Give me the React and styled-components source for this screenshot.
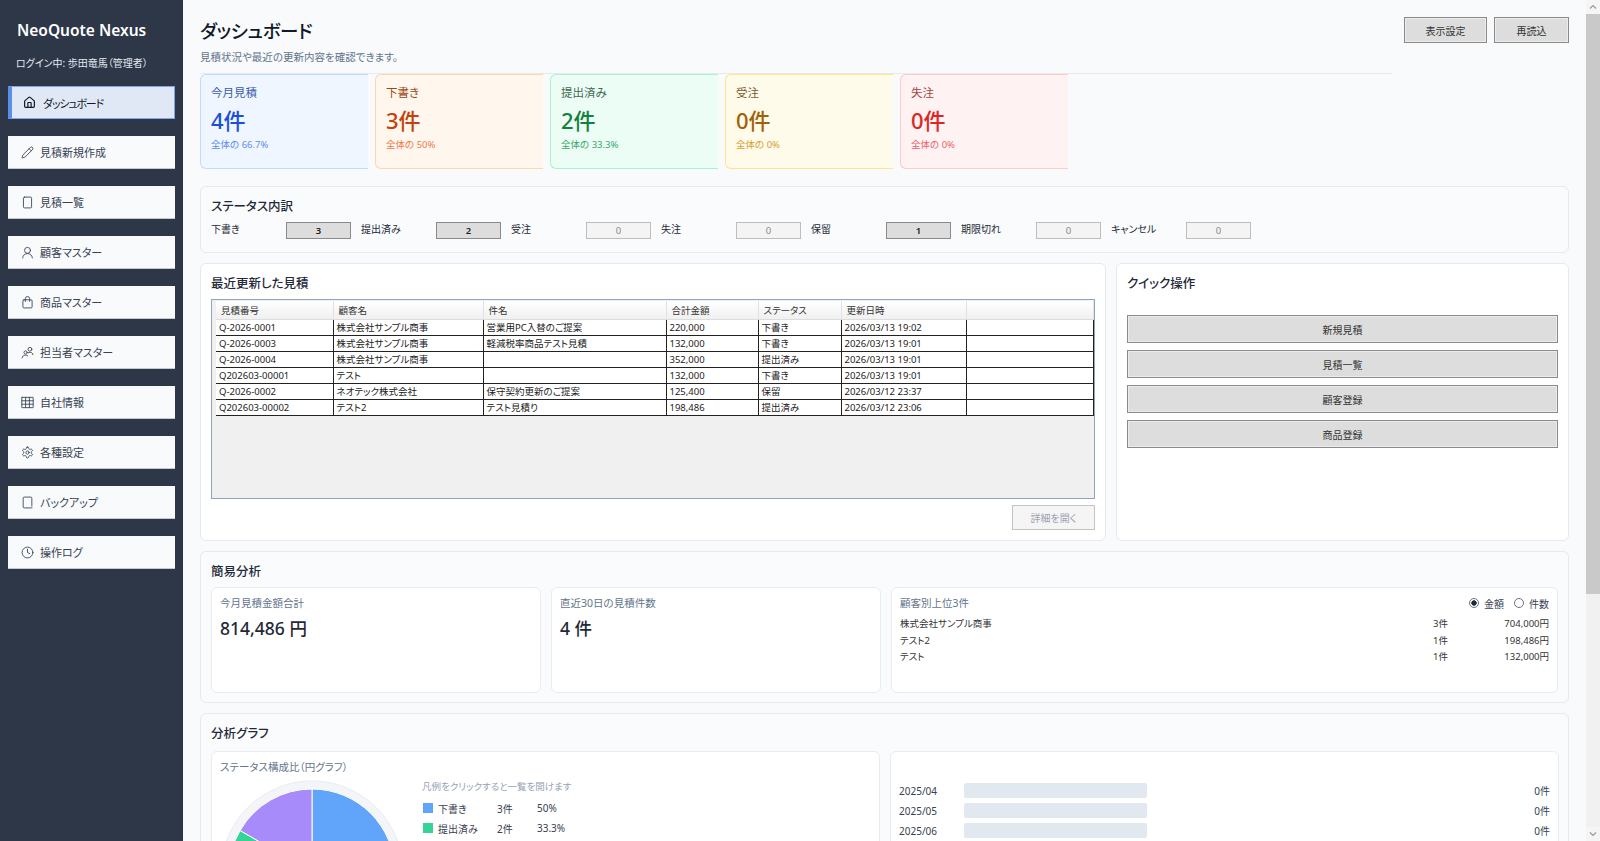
import React from 'react';
import styled, { createGlobalStyle } from 'styled-components';

const GlobalStyle = createGlobalStyle`
  html, body {
    margin: 0;
    height: 100%;
    overflow: hidden;
    background: #f8fafc;
  }
  * {
    box-sizing: border-box;
  }
  body {
    font-family: "Noto Sans", "Noto Sans CJK JP", sans-serif;
    font-feature-settings: "palt";
    font-size: 11px;
    color: #1f2937;
  }
`;

const Shell = styled.div`
  display: flex;
  width: 1600px;
  height: 841px;
  overflow: hidden;
`;

const Sidebar = styled.aside`
  flex: 0 0 183px;
  background: #2d3748;
  padding: 0 8px;
`;

const Brand = styled.div`
  margin: 18px 0 0 9px;
  height: 24px;
  line-height: 24px;
  font-size: 15.5px;
  font-weight: 600;
  color: #ffffff;
`;

const LoginInfo = styled.div`
  margin: 13px 0 15px 8px;
  height: 16px;
  line-height: 16px;
  font-size: 10px;
  color: #e2e8f0;
`;

const NavList = styled.nav`
  display: flex;
  flex-direction: column;
  gap: 17px;
`;

const NavButton = styled.div`
  display: flex;
  align-items: center;
  height: 33px;
  gap: ${p => (p.$active ? '7px' : '6px')};
  padding-left: ${p => (p.$active ? '11px' : '13px')};
  font-size: 11px;
  letter-spacing: ${p => (p.$active ? '-1.2px' : '0')};
  color: #374151;
  background: ${p => (p.$active ? '#e1e8f5' : '#f8fafc')};
  border-bottom: 1px solid #c4c9d0;
  ${p =>
    p.$active &&
    `
    color: #111827;
    border: 1px solid #7fa6e6;
    border-left: 4px solid #5b8ee6;
  `}
  svg {
    flex: none;
    width: 13px;
    height: 13px;
    fill: none;
    stroke: currentColor;
    stroke-width: ${p => (p.$active ? '2.2' : '1.6')};
    stroke-linecap: round;
    stroke-linejoin: round;
  }
`;

const Main = styled.main`
  flex: 1;
  min-width: 0;
  padding: 17px 17px 0;
  overflow: hidden;
  background: #f8fafc;
`;

const ScrollTrack = styled.div`
  flex: 0 0 14px;
  display: flex;
  flex-direction: column;
  background: #f1f1f1;
`;

const ScrollArrow = styled.div`
  flex: 0 0 14px;
  display: flex;
  align-items: center;
  justify-content: center;
  background: #f5f5f5;
  svg {
    width: 8px;
    height: 8px;
    fill: none;
    stroke: #9a9a9a;
    stroke-width: 1.2;
  }
`;

const ScrollThumb = styled.div`
  flex: 0 0 580px;
  background: #c9c9c9;
`;

const ScrollRest = styled.div`
  flex: 1;
`;

const TopArea = styled.div`
  display: flex;
  justify-content: space-between;
  align-items: flex-start;
`;

const Heading = styled.div`
  width: 1192px;
`;

const PageTitle = styled.h1`
  margin: 2px 0 0;
  height: 24px;
  line-height: 24px;
  font-size: 18.5px;
  letter-spacing: -0.4px;
  font-weight: 500;
  color: #111827;
`;

const PageSub = styled.p`
  margin: 6px 0 8px;
  height: 16px;
  line-height: 16px;
  font-size: 10.5px;
  color: #64748b;
`;

const CardRow = styled.div`
  display: flex;
  gap: 7px;
  border-top: 1px solid #e5eaf0;
`;

const SummaryCard = styled.div`
  flex: 0 0 168px;
  height: 95px;
  padding: 10px;
  background: ${p => p.$bg};
  border: 1px solid ${p => p.$line};
  border-right: none;
  border-radius: 6px 0 0 6px;
`;

const CardLabel = styled.div`
  height: 16px;
  line-height: 16px;
  font-size: 11.5px;
  color: ${p => p.$color};
`;

const CardValue = styled.div`
  margin-top: 5px;
  height: 28px;
  line-height: 28px;
  font-size: 22px;
  font-weight: 500;
  color: ${p => p.$color};
`;

const CardSub = styled.div`
  margin-top: 4px;
  height: 14px;
  line-height: 14px;
  font-size: 9.5px;
  color: ${p => p.$color};
`;

const ActionGroup = styled.div`
  display: flex;
  gap: 7px;
`;

const ClassicButton = styled.button`
  height: ${p => p.$height || 26}px;
  width: ${p => (p.$width ? `${p.$width}px` : 'auto')};
  padding: 0;
  font: inherit;
  font-size: 10px;
  color: ${p => (p.disabled ? '#9ca3af' : '#333333')};
  background: ${p => (p.disabled ? '#f5f5f5' : '#dddddd')};
  border: 1px solid ${p => (p.disabled ? '#c4c4c4' : '#8a8a8a')};
  box-shadow: ${p => (p.disabled ? 'none' : 'inset 0 0 0 1px #ececec')};
`;

const Panel = styled.section`
  margin-top: ${p => p.$top || 0}px;
  padding: 10px;
  height: ${p => (p.$height ? `${p.$height}px` : 'auto')};
  background: ${p => (p.$white ? '#ffffff' : '#f9fbfd')};
  border: 1px solid #e5eaf0;
  border-radius: 6px;
`;

const PanelTitle = styled.h2`
  margin: 0 0 ${p => p.$gap || 5}px;
  height: 20px;
  line-height: 20px;
  font-size: 12.5px;
  font-weight: 500;
  color: #1f2937;
`;

const StatusGrid = styled.div`
  display: grid;
  grid-template-columns: repeat(7, 150px);
  margin-top: 2px;
`;

const StatusCell = styled.div`
  display: flex;
  align-items: center;
  height: 17px;
`;

const StatusLabel = styled.span`
  flex: 0 0 75px;
  font-size: 10px;
  margin-top: -4px;
`;

const StatusValue = styled.span`
  flex: 0 0 65px;
  height: 17px;
  line-height: 15px;
  text-align: center;
  font-size: 9.5px;
  color: ${p => (p.$on ? '#222222' : '#8a8a8a')};
  font-weight: ${p => (p.$on ? 600 : 400)};
  background: ${p => (p.$on ? '#dddddd' : '#f4f4f4')};
  border: 1px solid ${p => (p.$on ? '#8a8a8a' : '#bdbdbd')};
`;

const SplitRow = styled.div`
  display: grid;
  grid-template-columns: 906px 453px;
  gap: 10px;
  margin-top: 10px;
`;

const TableFrame = styled.div`
  height: 200px;
  padding: 1px 0 0 4px;
  background: #f0f0f0;
  border: 1px solid #8ea4c2;
`;

const QuoteTable = styled.table`
  width: 100%;
  table-layout: fixed;
  border-collapse: collapse;
  font-size: 9.5px;
`;

const HeadCell = styled.th`
  width: ${p => (p.$w ? `${p.$w}px` : 'auto')};
  height: 18px;
  padding: 0 0 0 5px;
  text-align: left;
  font-weight: 400;
  color: #333333;
  background: linear-gradient(#ffffff, #f0f0f0);
  border-right: 1px solid #e2e2e2;
  border-bottom: 1px solid #dcdcdc;
`;

const BodyRow = styled.tr`
  height: 15.85px;
  background: #ffffff;
`;

const BodyCell = styled.td`
  padding: 1px 0 0 3px;
  line-height: 14px;
  color: #222222;
  white-space: nowrap;
  overflow: hidden;
  border-right: 1px solid #222222;
  border-bottom: 1px solid #222222;
`;

const DetailRow = styled.div`
  display: flex;
  justify-content: flex-end;
  margin-top: 6px;
`;

const QuickList = styled.div`
  display: flex;
  flex-direction: column;
  gap: 7px;
`;

const AnalysisGrid = styled.div`
  display: grid;
  grid-template-columns: 330px 330px 1fr;
  gap: 10px;
  height: 106px;
`;

const InnerCard = styled.div`
  padding: 7px 8px;
  background: #ffffff;
  border: 1px solid #e8ecf1;
  border-radius: 6px;
`;

const InnerLabel = styled.div`
  height: 16px;
  line-height: 16px;
  font-size: 10.5px;
  color: #64748b;
`;

const InnerValue = styled.div`
  margin-top: 5px;
  height: 24px;
  line-height: 24px;
  font-size: 17.5px;
  font-weight: 500;
  color: #1f2937;
`;

const RankHead = styled.div`
  display: flex;
  justify-content: space-between;
  align-items: center;
  margin-bottom: 5px;
`;

const RadioGroup = styled.div`
  display: flex;
  align-items: center;
  font-size: 10px;
  color: #374151;
`;

const RadioDot = styled.span`
  width: 10px;
  height: 10px;
  margin: 0 5px 0 10px;
  border-radius: 50%;
  border: 1px solid #6b7280;
  background: ${p => (p.$on ? 'radial-gradient(circle, #1f2937 0 2.4px, #ffffff 3px)' : '#ffffff')};
`;

const RankRow = styled.div`
  display: grid;
  grid-template-columns: 1fr 40px 101px;
  height: 16.5px;
  line-height: 16.5px;
  font-size: 9.5px;
  color: #333333;
`;

const RightText = styled.span`
  text-align: right;
`;

const GraphGrid = styled.div`
  display: grid;
  grid-template-columns: 669px 669px;
  gap: 10px;
`;

const GraphCard = styled(InnerCard)`
  height: 240px;
`;

const PieRow = styled.div`
  display: flex;
  margin-top: 5px;
`;

const PieSvg = styled.svg`
  flex: 0 0 184px;
  width: 184px;
  height: 184px;
`;

const Legend = styled.div`
  margin: -1px 0 0 18px;
`;

const LegendHint = styled.div`
  height: 16px;
  line-height: 16px;
  font-size: 9.5px;
  color: #94a3b8;
`;

const LegendRow = styled.div`
  display: flex;
  align-items: center;
  height: 20px;
  font-size: 10px;
  color: #374151;
  margin-top: ${p => (p.$first ? '3px' : '0')};
`;

const LegendSwatch = styled.span`
  flex: 0 0 10px;
  height: 10px;
  margin: 0 5px 0 1px;
  background: ${p => p.$color};
`;

const LegendName = styled.span`
  flex: 0 0 59px;
`;

const LegendCount = styled.span`
  flex: 0 0 40px;
`;

const BarList = styled.div`
  display: flex;
  flex-direction: column;
  gap: 5px;
  padding-top: 24px;
`;

const BarRow = styled.div`
  display: flex;
  align-items: center;
  height: 15px;
  font-size: 10px;
  color: #374151;
`;

const BarMonth = styled.span`
  flex: 0 0 65px;
`;

const BarTrack = styled.span`
  flex: 0 0 183px;
  height: 15px;
  background: #e2e8f0;
  border-radius: 2px;
`;

const BarCount = styled.span`
  flex: 1;
  text-align: right;
`;

const navItems = [
  {
    label: 'ダッシュボード',
    active: true,
    icon: (
      <>
        <path d="M15 21v-8a1 1 0 0 0-1-1h-4a1 1 0 0 0-1 1v8" />
        <path d="M3 10a2 2 0 0 1 .7-1.5l7-6a2 2 0 0 1 2.6 0l7 6A2 2 0 0 1 21 10v9a2 2 0 0 1-2 2H5a2 2 0 0 1-2-2z" />
      </>
    ),
  },
  {
    label: '見積新規作成',
    icon: (
      <>
        <path d="M21.2 6.8a2.8 2.8 0 0 0-4-4L3.8 16.2a2 2 0 0 0-.5.8l-1.3 4.4a.5.5 0 0 0 .6.6l4.4-1.3a2 2 0 0 0 .8-.5z" />
        <path d="m15 5 4 4" />
      </>
    ),
  },
  { label: '見積一覧', icon: <rect x="4.5" y="2" width="15" height="20" rx="2" /> },
  {
    label: '顧客マスター',
    icon: (
      <>
        <circle cx="12" cy="8" r="5.5" />
        <path d="M3 22c.5-5 4-8 9-8s8.5 3 9 8" />
      </>
    ),
  },
  {
    label: '商品マスター',
    icon: (
      <>
        <rect x="3.5" y="7" width="17" height="15" rx="2" />
        <path d="M8 10V5a4 4 0 0 1 8 0v5" />
      </>
    ),
  },
  {
    label: '担当者マスター',
    icon: (
      <>
        <circle cx="8.5" cy="12" r="3" />
        <path d="M2 22c.4-3.5 3-5 6.5-5 1.5 0 3 .4 4 1.2" />
        <circle cx="16.5" cy="6" r="3.5" />
        <path d="M13.5 12.5c2-1 5.5-1 7 .5 1 1 1.5 2 1.5 3" />
      </>
    ),
  },
  {
    label: '自社情報',
    icon: (
      <>
        <rect x="1.5" y="2.5" width="21" height="19" rx="0.5" />
        <path d="M1.5 8.8h21M1.5 15.2h21M8.5 2.5v19M15.5 2.5v19" />
      </>
    ),
  },
  {
    label: '各種設定',
    icon: (
      <>
        <path d="M12.22 2h-.44a2 2 0 0 0-2 2v.18a2 2 0 0 1-1 1.73l-.43.25a2 2 0 0 1-2 0l-.15-.08a2 2 0 0 0-2.73.73l-.22.38a2 2 0 0 0 .73 2.73l.15.1a2 2 0 0 1 1 1.72v.51a2 2 0 0 1-1 1.74l-.15.09a2 2 0 0 0-.73 2.73l.22.38a2 2 0 0 0 2.73.73l.15-.08a2 2 0 0 1 2 0l.43.25a2 2 0 0 1 1 1.73V20a2 2 0 0 0 2 2h.44a2 2 0 0 0 2-2v-.18a2 2 0 0 1 1-1.73l.43-.25a2 2 0 0 1 2 0l.15.08a2 2 0 0 0 2.73-.73l.22-.39a2 2 0 0 0-.73-2.73l-.15-.08a2 2 0 0 1-1-1.74v-.5a2 2 0 0 1 1-1.74l.15-.09a2 2 0 0 0 .73-2.73l-.22-.38a2 2 0 0 0-2.73-.73l-.15.08a2 2 0 0 1-2 0l-.43-.25a2 2 0 0 1-1-1.73V4a2 2 0 0 0-2-2z" />
        <circle cx="12" cy="12" r="3" />
      </>
    ),
  },
  {
    label: 'バックアップ',
    icon: (
      <>
        <path d="M20 18V4a2 2 0 0 0-2-2H6a2 2 0 0 0-2 2v16a2 2 0 0 0 2 2h12" />
        <path d="M20 20.5v1.5" />
      </>
    ),
  },
  {
    label: '操作ログ',
    icon: (
      <>
        <circle cx="12" cy="12" r="10" />
        <path d="M12 6v6l4 2" />
      </>
    ),
  },
];

const summaryCards = [
  { label: '今月見積', value: '4件', sub: '全体の 66.7%', bg: '#eff6ff', line: '#bfdbfe', head: '#3b5ba9', main: '#1d4ed8', note: '#5b8def' },
  { label: '下書き', value: '3件', sub: '全体の 50%', bg: '#fff7ed', line: '#fed7aa', head: '#9a4a20', main: '#c2410c', note: '#f0784a' },
  { label: '提出済み', value: '2件', sub: '全体の 33.3%', bg: '#ecfdf5', line: '#a7f3d0', head: '#3f6b50', main: '#15803d', note: '#35a868' },
  { label: '受注', value: '0件', sub: '全体の 0%', bg: '#fffbeb', line: '#fde68a', head: '#7c5a2e', main: '#a16207', note: '#d69e2e' },
  { label: '失注', value: '0件', sub: '全体の 0%', bg: '#fef2f2', line: '#fecaca', head: '#a14646', main: '#dc2626', note: '#ee5f6a' },
];

const statusCounts = [
  ['下書き', 3],
  ['提出済み', 2],
  ['受注', 0],
  ['失注', 0],
  ['保留', 1],
  ['期限切れ', 0],
  ['キャンセル', 0],
];

const columns = [
  ['見積番号', 117],
  ['顧客名', 150],
  ['件名', 183],
  ['合計金額', 92],
  ['ステータス', 83],
  ['更新日時', 125],
  ['', 0],
];

const quotes = [
  ['Q-2026-0001', '株式会社サンプル商事', '営業用PC入替のご提案', '220,000', '下書き', '2026/03/13 19:02'],
  ['Q-2026-0003', '株式会社サンプル商事', '軽減税率商品テスト見積', '132,000', '下書き', '2026/03/13 19:01'],
  ['Q-2026-0004', '株式会社サンプル商事', '', '352,000', '提出済み', '2026/03/13 19:01'],
  ['Q202603-00001', 'テスト', '', '132,000', '下書き', '2026/03/13 19:01'],
  ['Q-2026-0002', 'ネオテック株式会社', '保守契約更新のご提案', '125,400', '保留', '2026/03/12 23:37'],
  ['Q202603-00002', 'テスト2', 'テスト見積り', '198,486', '提出済み', '2026/03/12 23:06'],
];

const ranking = [
  ['株式会社サンプル商事', '3件', '704,000円'],
  ['テスト2', '1件', '198,486円'],
  ['テスト', '1件', '132,000円'],
];

const legend = [
  ['下書き', '3件', '50%', '#60a5fa'],
  ['提出済み', '2件', '33.3%', '#34d399'],
];

const months = ['2025/04', '2025/05', '2025/06'];

const App = () => (
  <>
    <GlobalStyle />
    <Shell>
      <Sidebar>
        <Brand>NeoQuote Nexus</Brand>
        <LoginInfo>ログイン中: 歩田竜馬（管理者）</LoginInfo>
        <NavList>
          {navItems.map(item => (
            <NavButton key={item.label} $active={item.active}>
              <svg viewBox="0 0 24 24">{item.icon}</svg>
              {item.label}
            </NavButton>
          ))}
        </NavList>
      </Sidebar>

      <Main>
        <TopArea>
          <Heading>
            <PageTitle>ダッシュボード</PageTitle>
            <PageSub>見積状況や最近の更新内容を確認できます。</PageSub>
            <CardRow>
              {summaryCards.map(card => (
                <SummaryCard key={card.label} $bg={card.bg} $line={card.line}>
                  <CardLabel $color={card.head}>{card.label}</CardLabel>
                  <CardValue $color={card.main}>{card.value}</CardValue>
                  <CardSub $color={card.note}>{card.sub}</CardSub>
                </SummaryCard>
              ))}
            </CardRow>
          </Heading>
          <ActionGroup>
            <ClassicButton $width={83}>表示設定</ClassicButton>
            <ClassicButton $width={75}>再読込</ClassicButton>
          </ActionGroup>
        </TopArea>

        <Panel $top={17} $height={67}>
          <PanelTitle $gap={0}>ステータス内訳</PanelTitle>
          <StatusGrid>
            {statusCounts.map(([label, count]) => (
              <StatusCell key={label}>
                <StatusLabel>{label}</StatusLabel>
                <StatusValue $on={count > 0}>{count}</StatusValue>
              </StatusCell>
            ))}
          </StatusGrid>
        </Panel>

        <SplitRow>
          <Panel $white $height={278}>
            <PanelTitle>最近更新した見積</PanelTitle>
            <TableFrame>
              <QuoteTable>
                <thead>
                  <tr>
                    {columns.map(([name, width]) => (
                      <HeadCell key={name} $w={width}>{name}</HeadCell>
                    ))}
                  </tr>
                </thead>
                <tbody>
                  {quotes.map(row => (
                    <BodyRow key={row[0]}>
                      {row.map((value, i) => (
                        <BodyCell key={i}>{value}</BodyCell>
                      ))}
                      <BodyCell />
                    </BodyRow>
                  ))}
                </tbody>
              </QuoteTable>
            </TableFrame>
            <DetailRow>
              <ClassicButton disabled $width={83} $height={25}>詳細を開く</ClassicButton>
            </DetailRow>
          </Panel>
          <Panel $white $height={278}>
            <PanelTitle $gap={21}>クイック操作</PanelTitle>
            <QuickList>
              {['新規見積', '見積一覧', '顧客登録', '商品登録'].map(label => (
                <ClassicButton key={label} $height={28}>{label}</ClassicButton>
              ))}
            </QuickList>
          </Panel>
        </SplitRow>

        <Panel $top={10} $height={152}>
          <PanelTitle>簡易分析</PanelTitle>
          <AnalysisGrid>
            <InnerCard>
              <InnerLabel>今月見積金額合計</InnerLabel>
              <InnerValue>814,486 円</InnerValue>
            </InnerCard>
            <InnerCard>
              <InnerLabel>直近30日の見積件数</InnerLabel>
              <InnerValue>4 件</InnerValue>
            </InnerCard>
            <InnerCard>
              <RankHead>
                <InnerLabel>顧客別上位3件</InnerLabel>
                <RadioGroup>
                  <RadioDot $on />金額
                  <RadioDot />件数
                </RadioGroup>
              </RankHead>
              {ranking.map(([name, count, amount]) => (
                <RankRow key={name}>
                  <span>{name}</span>
                  <RightText>{count}</RightText>
                  <RightText>{amount}</RightText>
                </RankRow>
              ))}
            </InnerCard>
          </AnalysisGrid>
        </Panel>

        <Panel $top={10}>
          <PanelTitle $gap={7}>分析グラフ</PanelTitle>
          <GraphGrid>
            <GraphCard>
              <InnerLabel>ステータス構成比（円グラフ）</InnerLabel>
              <PieRow>
                <PieSvg viewBox="0 0 184 184">
                  <circle cx="92" cy="92" r="91" fill="#f3f5f8" stroke="#e8ecf1" />
                  <path d="M92 9A83 83 0 0 1 92 175Z" fill="#60a5fa" stroke="#ffffff" />
                  <path d="M92 92V175A83 83 0 0 1 20.1 50.5Z" fill="#34d399" stroke="#ffffff" />
                  <path d="M92 92L20.1 50.5A83 83 0 0 1 92 9Z" fill="#a78bfa" stroke="#ffffff" />
                </PieSvg>
                <Legend>
                  <LegendHint>凡例をクリックすると一覧を開けます</LegendHint>
                  {legend.map(([name, count, rate, color], i) => (
                    <LegendRow key={name} $first={i === 0}>
                      <LegendSwatch $color={color} />
                      <LegendName>{name}</LegendName>
                      <LegendCount>{count}</LegendCount>
                      <span>{rate}</span>
                    </LegendRow>
                  ))}
                </Legend>
              </PieRow>
            </GraphCard>
            <GraphCard>
              <BarList>
                {months.map(month => (
                  <BarRow key={month}>
                    <BarMonth>{month}</BarMonth>
                    <BarTrack />
                    <BarCount>0件</BarCount>
                  </BarRow>
                ))}
              </BarList>
            </GraphCard>
          </GraphGrid>
        </Panel>
      </Main>

      <ScrollTrack>
        <ScrollArrow>
          <svg viewBox="0 0 8 8"><path d="M1 5.5 4 2.5 7 5.5" /></svg>
        </ScrollArrow>
        <ScrollThumb />
        <ScrollRest />
        <ScrollArrow>
          <svg viewBox="0 0 8 8"><path d="M1 2.5 4 5.5 7 2.5" /></svg>
        </ScrollArrow>
      </ScrollTrack>
    </Shell>
  </>
);

export default App;
